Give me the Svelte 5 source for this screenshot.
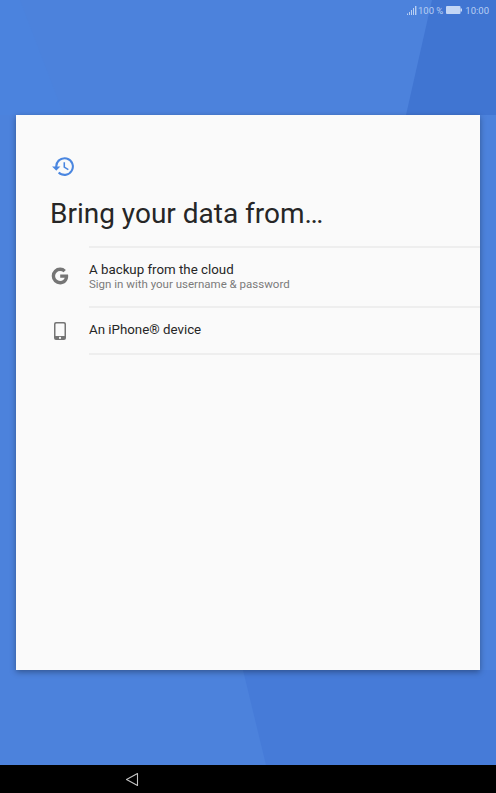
<script>
	const options = [
		{ title: 'A backup from the cloud', sub: 'Sign in with your username & password', icon: 'google' },
		{ title: 'An iPhone® device', sub: '', icon: 'phone' }
	];
</script>

<div class="screen">
	<svg class="wedges" viewBox="0 0 496 765" aria-hidden="true">
		<polygon points="0,0 20,0 64,115 0,115" fill="#4b83de" />
		<polygon points="432,0 496,0 496,115 406,115" fill="#4075d2" />
		<polygon points="243,670 496,670 496,765 266,765" fill="#467bd8" />
	</svg>

	<header class="status">
		<svg class="signal" width="10" height="9" viewBox="0 0 10 9" aria-hidden="true">
			<path d="M0 7.500h1V9H0zM2 6h1v3H2zM4 4h1v5H4zM6 2h1v7H6zM8 0h1.400v9H8z" fill="#b9cff2" />
		</svg>
		<span class="pct">100 %</span>
		<svg class="battery" width="16" height="8" viewBox="0 0 16 8" aria-hidden="true">
			<rect width="14.500" height="8" rx="1" fill="#c3d6f5" />
			<rect x="14.500" y="2.500" width="1.500" height="3" fill="#c3d6f5" />
		</svg>
		<span>10:00</span>
	</header>

	<main class="stage">
		<section class="card">
			<svg class="history" width="25" height="25" viewBox="0 0 24 24" aria-hidden="true">
				<path fill="#4a86e0" d="M13 3a9 9 0 0 0-9 9H1l3.900 3.900.1.1L9 12H6a7 7 0 1 1 2.050 4.950l-1.420 1.420A9 9 0 1 0 13 3zm-1 5v5l4.280 2.540.72-1.210-3.500-2.080V8H12z" />
			</svg>
			<h1>Bring your data from…</h1>

			<ul>
				{#each options as o}
					<li>
						<span class="icon">
							{#if o.icon === 'google'}
								<svg width="18" height="18" viewBox="0 0 18 18" aria-hidden="true">
									<path fill="#757575" d="M9.200 7.400v3.300h4.500c-.4 2-2.200 3.200-4.500 3.200A5 5 0 0 1 4.100 9a5 5 0 0 1 5.100-4.900c1.300 0 2.400.4 3.300 1.200l2.400-2.400A8.400 8.400 0 0 0 9.200.6 8.400 8.400 0 0 0 .7 9a8.400 8.400 0 0 0 8.500 8.400c4.300 0 8-3 8-8.400 0-.5-.1-1.100-.2-1.600H9.200z" />
								</svg>
							{:else}
								<svg width="12" height="18" viewBox="0 0 12 18" aria-hidden="true">
									<path fill="#757575" fill-rule="evenodd" d="M2 0h8a2 2 0 0 1 2 2v14a2 2 0 0 1-2 2H2a2 2 0 0 1-2-2V2a2 2 0 0 1 2-2zm-.5 2.500v11.500h9V2.500a1 1 0 0 0-1-1h-7a1 1 0 0 0-1 1zM6 14.800a1.100 1.100 0 1 0 0 2.200 1.100 1.100 0 0 0 0-2.200z" />
								</svg>
							{/if}
						</span>
						<div class="text">
							<div class="title">{o.title}</div>
							{#if o.sub}<div class="sub">{o.sub}</div>{/if}
						</div>
					</li>
				{/each}
			</ul>
		</section>
	</main>

	<nav class="navbar">
		<svg width="14" height="15" viewBox="0 0 14 15" aria-hidden="true">
			<path d="M12.500 1.500v12L1.500 7.500z" fill="none" stroke="#c4c4c4" stroke-width="1.100" stroke-linejoin="round" />
		</svg>
	</nav>
</div>

<style>
	:global(body) {
		margin: 0;
	}

	.screen {
		position: relative;
		width: 496px;
		height: 793px;
		display: flex;
		flex-direction: column;
		background: #4c82dc;
		font-family: Roboto, "Liberation Sans", sans-serif;
		overflow: hidden;
	}

	.wedges {
		position: absolute;
		top: 0;
		left: 0;
		width: 496px;
		height: 765px;
	}

	.status {
		position: relative;
		height: 20px;
		display: flex;
		align-items: center;
		justify-content: flex-end;
		gap: 1px;
		padding-right: 7px;
		font-size: 9.5px;
		color: #b9cff2;
	}

	.pct {
		margin-right: 2px;
	}

	.battery {
		margin-right: 2px;
	}

	.stage {
		position: relative;
		flex: 1;
		padding: 95px 16px;
		display: flex;
		min-height: 0;
	}

	.card {
		flex: 1;
		background: #fafafa;
		box-shadow: 0 2px 6px rgba(0, 0, 0, 0.35);
		padding: 39px 0 0 34px;
	}

	.history {
		display: block;
		margin-left: 1px;
	}

	h1 {
		margin: 17px 0 0;
		font-size: 28px;
		font-weight: 400;
		line-height: 36px;
		color: #262626;
	}

	ul {
		list-style: none;
		margin: 14px 0 0;
		padding: 0;
	}

	li {
		display: flex;
		align-items: center;
	}

	.icon {
		width: 39px;
		padding-right: 20px;
		display: flex;
		justify-content: center;
		box-sizing: border-box;
		flex: none;
	}

	.text {
		flex: 1;
		display: flex;
		flex-direction: column;
		padding: 13px 0 15px;
		border-top: 2px solid #eeeeee;
	}

	li:last-child .text {
		border-bottom: 2px solid #eeeeee;
	}

	.title {
		font-size: 13.3px;
		line-height: 17px;
		color: #262626;
	}

	.sub {
		font-size: 11.5px;
		line-height: 13px;
		color: #7b7b7b;
	}

	.navbar {
		position: relative;
		height: 28px;
		background: #000;
		display: flex;
		align-items: center;
		padding-left: 125px;
	}
</style>
